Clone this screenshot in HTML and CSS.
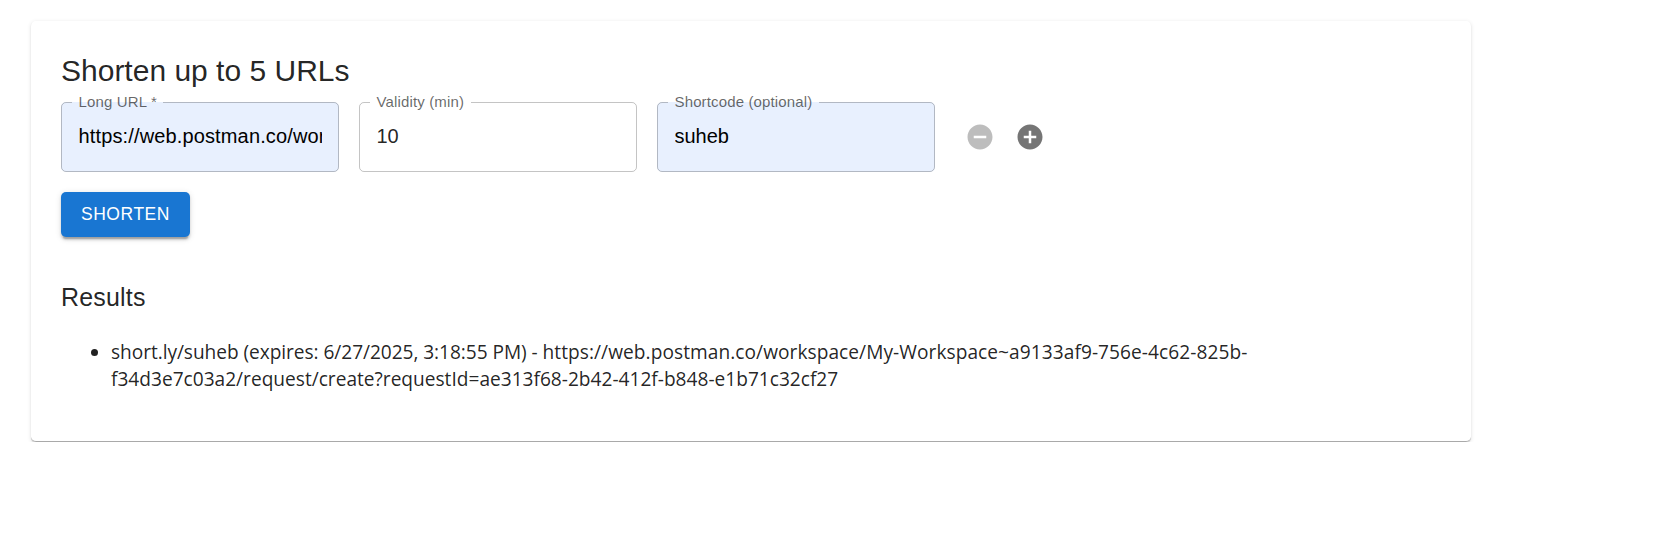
FILE: index.html
```html
<!DOCTYPE html>
<html lang="en">
<head>
<meta charset="utf-8">
<title>URL Shortener</title>
<link rel="stylesheet" href="styles.css">
</head>
<body>
<main class="card">
  <h1 class="title">Shorten up to 5 URLs</h1>
  <form class="form">
    <div class="row">
      <div class="field filled">
        <div class="value url">https://web.postman.co/wor</div>
        <fieldset class="outline"><legend>Long URL *</legend></fieldset>
        <label class="label">Long URL *</label>
      </div>
      <div class="field">
        <div class="value">10</div>
        <fieldset class="outline"><legend>Validity (min)</legend></fieldset>
        <label class="label">Validity (min)</label>
      </div>
      <div class="field filled">
        <div class="value">suheb</div>
        <fieldset class="outline"><legend>Shortcode (optional)</legend></fieldset>
        <label class="label">Shortcode (optional)</label>
      </div>
      <div class="actions">
        <button type="button" class="icon-button" disabled aria-label="Remove">
          <svg viewBox="0 0 24 24"><path d="M12 2C6.480 2 2 6.480 2 12s4.480 10 10 10 10-4.480 10-10S17.520 2 12 2zm5 11H7v-2h10v2z"/></svg>
        </button>
        <button type="button" class="icon-button" aria-label="Add">
          <svg viewBox="0 0 24 24"><path d="M12 2C6.480 2 2 6.480 2 12s4.480 10 10 10 10-4.480 10-10S17.520 2 12 2zm5 11h-4v4h-2v-4H7v-2h4V7h2v4h4v2z"/></svg>
        </button>
      </div>
    </div>
    <button type="button" class="submit">SHORTEN</button>
  </form>
  <h2 class="subtitle">Results</h2>
  <ul class="results">
    <li><span class="short">short.ly/suheb (expires: 6/27/2025, 3:18:55 PM) - </span><span class="long">https://web.postman.co/workspace/My-Workspace~a9133af9-756e-4c62-825b-</span><br>f34d3e7c03a2/request/create?requestId=ae313f68-2b42-412f-b848-e1b71c32cf27</li>
  </ul>
</main>
</body>
</html>
```
FILE: styles.css
```css
* { box-sizing: border-box; }
body {
  margin: 0;
  background: #fff;
  color: rgba(0, 0, 0, 0.87);
  font-family: "Liberation Sans", Arial, sans-serif;
}
.card {
  width: 1440px;
  height: 421px;
  margin: 21px 0 0 31px;
  padding: 30px;
  border-bottom: 1px solid #a9a9a9;
  border-radius: 5px;
  box-shadow: 0 1px 1px rgba(0, 0, 0, 0.14), 0 1px 4px rgba(0, 0, 0, 0.12);
}
.title { margin: 0; font-size: 30px; font-weight: 400; line-height: 40px; height: 51px; }
.row { display: flex; gap: 20px; align-items: center; }
.field { position: relative; width: 278px; height: 70px; padding: 0 17.5px; border-radius: 5px; }
.filled { background: #e8f0fe; }
.filled .value { color: #000; }
.value { height: 68px; line-height: 68px; font-size: 20px; overflow: hidden; white-space: nowrap; }
.url { letter-spacing: 0.14px; }
.outline {
  position: absolute;
  inset: -7px 0 0;
  margin: 0;
  padding: 0 10px;
  min-width: 0;
  border: 1px solid rgba(0, 0, 0, 0.23);
  border-radius: 5px;
}
.outline legend {
  height: 14px;
  padding: 0 6.5px;
  font-size: 15px;
  line-height: 14px;
  letter-spacing: 0.14px;
  visibility: hidden;
}
.label {
  position: absolute;
  left: 17.5px;
  top: -10px;
  font-size: 15px;
  line-height: 20px;
  letter-spacing: 0.14px;
  color: rgba(0, 0, 0, 0.6);
}
.actions { display: flex; }
.icon-button { width: 50px; height: 50px; padding: 10px; border: 0; background: none; color: rgba(0, 0, 0, 0.54); }
.icon-button:disabled { color: rgba(0, 0, 0, 0.26); }
.icon-button svg { display: block; width: 30px; height: 30px; fill: currentColor; }
.submit {
  display: block;
  width: 129px;
  height: 45px;
  margin-top: 20px;
  padding: 0 0 1px;
  border: 0;
  border-radius: 5px;
  background: #1976d2;
  color: #fff;
  font: 500 17.5px "Liberation Sans", Arial, sans-serif;
  letter-spacing: 0.55px;
  box-shadow: 0 3.75px 1.25px -2.5px rgba(0, 0, 0, 0.2), 0 2.5px 2.5px rgba(0, 0, 0, 0.14), 0 1.25px 6.25px rgba(0, 0, 0, 0.12);
}
.subtitle { margin: 40px 0 0; font-size: 25px; font-weight: 400; line-height: 40px; letter-spacing: 0.19px; }
.results { margin: 22px 0 0; padding-left: 50px; font: 19.13px/27px "Open Sans", "Noto Sans", sans-serif; white-space: nowrap; }
.short { letter-spacing: -0.055px; }
.long { letter-spacing: 0.06px; }
```
